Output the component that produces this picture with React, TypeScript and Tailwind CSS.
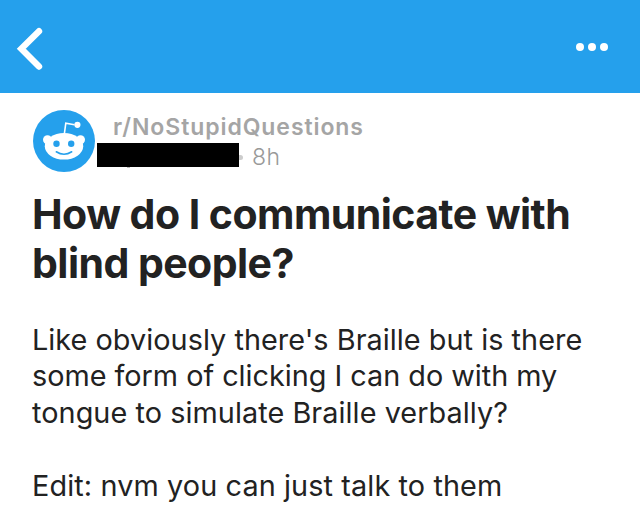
function BackIcon() {
  return (
    <svg width="28" height="44" viewBox="16 27 28 44" fill="none" aria-hidden="true">
      <path d="M39 31.2 21.3 48.8 39 66.6" stroke="#fff" strokeWidth="6.4" strokeLinecap="round" strokeLinejoin="miter" />
    </svg>
  );
}

function Avatar() {
  return (
    <svg className="shrink-0" width="64" height="64" viewBox="32 109 64 64" aria-hidden="true">
      <circle cx="64" cy="141" r="31" fill="#25a0ec" />
      <path d="M64.2 135 65.8 123.1 74.5 124.7" fill="none" stroke="#fff" strokeWidth="1.6" />
      <circle cx="77.4" cy="124.8" r="3.1" fill="#fff" />
      <circle cx="47.5" cy="139.8" r="4.5" fill="#fff" />
      <circle cx="80.5" cy="139.8" r="4.5" fill="#fff" />
      <ellipse cx="64" cy="146.3" rx="19.2" ry="13.2" fill="#fff" />
      <circle cx="56.5" cy="143.8" r="3.2" fill="#25a0ec" />
      <circle cx="71.2" cy="143.8" r="3.2" fill="#25a0ec" />
      <path d="M56.3 151.8Q64 156.6 71.7 151.8" fill="none" stroke="#25a0ec" strokeWidth="1.6" strokeLinecap="round" />
    </svg>
  );
}

export default function App() {
  return (
    <div className="h-[528px] w-[640px] overflow-hidden bg-white font-['Inter',sans-serif] text-[#222222]">
      <header className="flex h-[93px] justify-between bg-[#25a0ec] pl-4 pr-8 pt-[27px]">
        <button aria-label="Back" className="h-11">
          <BackIcon />
        </button>
        <button aria-label="More" className="flex h-10 items-center gap-1">
          <span className="size-2 rounded-full bg-white" />
          <span className="size-2 rounded-full bg-white" />
          <span className="size-2 rounded-full bg-white" />
        </button>
      </header>
      <main className="px-8">
        <div className="flex h-[97px] pt-4">
          <Avatar />
          <div className="ml-px pt-[3px]">
            <p className="ml-4 h-[31px] whitespace-nowrap text-[23px] font-semibold leading-[30px] tracking-[0.92px] text-[#a5a5a5]">
              r/NoStupidQuestions
            </p>
            <div className="flex h-6 items-center">
              <span className="relative h-6 w-[142px] bg-black">
                <span className="absolute left-[30px] top-full h-px w-[3px] bg-[#bbbbbb]" />
              </span>
              <span className="mt-1 h-[5px] w-1 rounded-r-full bg-[#cccccc]" />
              <span className="ml-[9px] pt-1 text-[23px] font-light leading-6 tracking-[0.4px] text-[#999999]">8h</span>
            </div>
          </div>
        </div>
        <h1 className="whitespace-nowrap text-[41px] font-bold leading-[49px] tracking-[-0.54px]">
          <span className="block">How do I communicate with</span>
          <span className="block">blind people?</span>
        </h1>
        <div className="whitespace-nowrap pt-[34px] text-[28.8px] leading-[36.5px]">
          <p>
            <span className="block h-9 tracking-[0.05px]">Like obviously there's Braille but is there</span>
            <span className="block h-[37px] tracking-[-0.01px]">some form of clicking I can do with my</span>
            <span className="block tracking-[0.07px]">tongue to simulate Braille verbally?</span>
          </p>
          <p className="pt-[36.5px] tracking-[0.12px]">Edit: nvm you can just talk to them</p>
        </div>
      </main>
    </div>
  );
}
